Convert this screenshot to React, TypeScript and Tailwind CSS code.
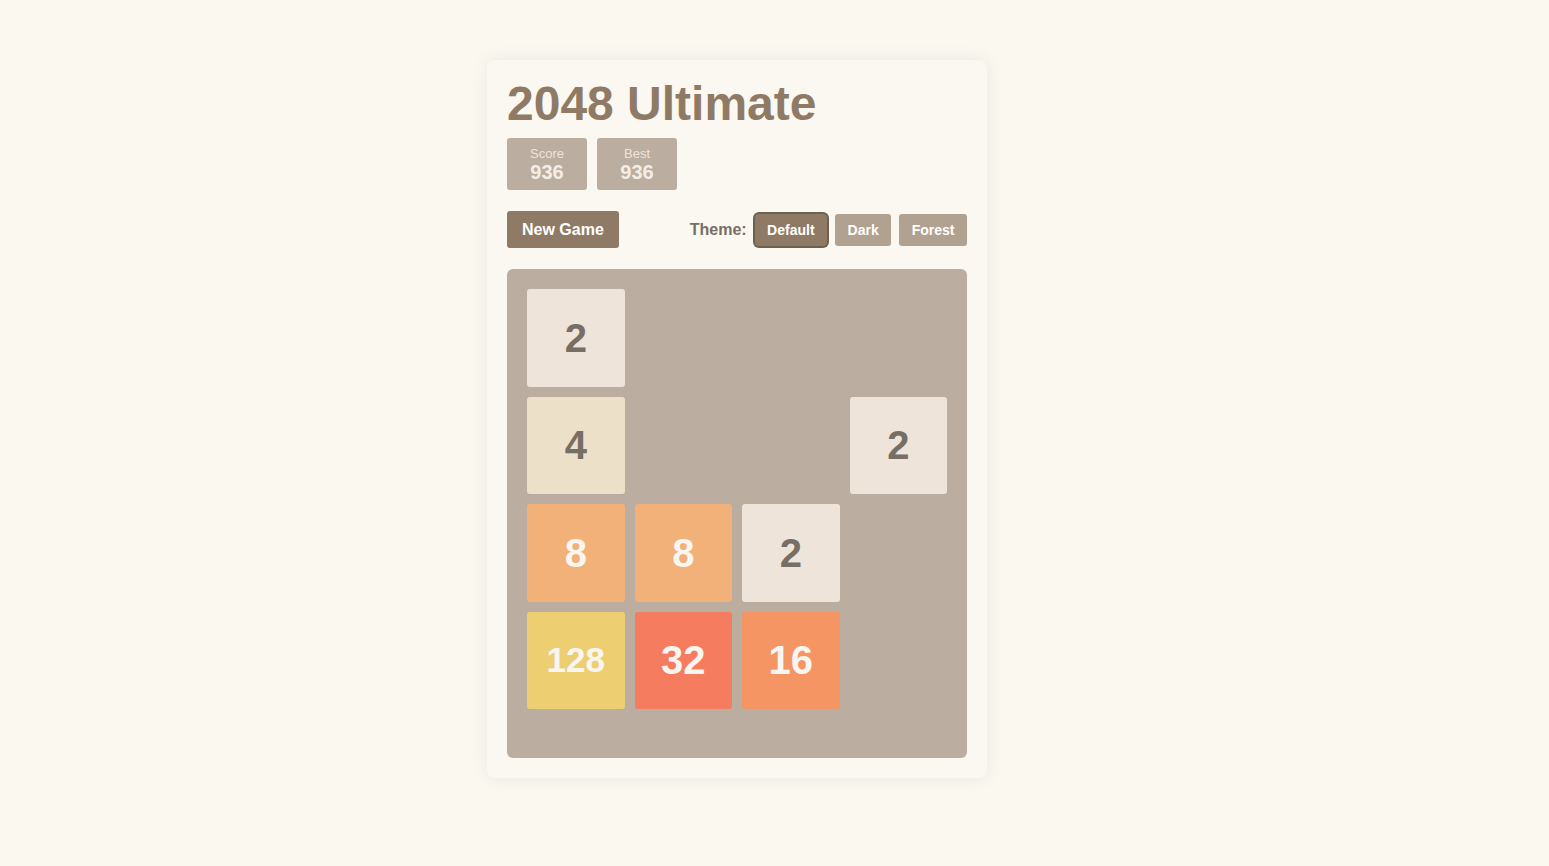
const tiles: (number | null)[] = [
  2, null, null, null,
  4, null, null, 2,
  8, 8, 2, null,
  128, 32, 16, null,
];

const tileStyle: Record<number, string> = {
  2: "bg-[#eee4da] text-[#776e65] text-[40px]",
  4: "bg-[#ede0c8] text-[#776e65] text-[40px]",
  8: "bg-[#f2b179] text-[#f9f6f2] text-[40px]",
  16: "bg-[#f59563] text-[#f9f6f2] text-[40px]",
  32: "bg-[#f67c5f] text-[#f9f6f2] text-[40px]",
  128: "bg-[#edcf72] text-[#f9f6f2] text-[35px]",
};

function ScoreBox({ label, value }: { label: string; value: number }) {
  return (
    <div className="w-20 h-[52px] bg-[#bbada0] rounded-[3px] flex flex-col items-center pt-[8px]">
      <span className="text-[13px] leading-[15px] text-[#eee4da]">{label}</span>
      <span className="text-[20px] leading-[23px] font-bold text-[#f3ede6]">{value}</span>
    </div>
  );
}

export default function App() {
  return (
    <div className="min-h-[866px] bg-[#faf8ef] pt-[60px] pl-[487px] font-['Liberation_Sans',Arial,sans-serif]">
      <div className="w-[500px] bg-[#faf8f0] rounded-lg p-5 shadow-[0_0_18px_rgba(0,0,0,0.07)]">
        <h1 className="text-[48px] leading-none font-bold text-[#8f7a66]">2048 Ultimate</h1>
        <div className="flex gap-[10px] mt-[10px]">
          <ScoreBox label="Score" value={936} />
          <ScoreBox label="Best" value={936} />
        </div>

        <div className="flex items-center justify-between mt-[21px]">
          <button className="h-[37px] px-[15px] bg-[#8f7a66] text-white text-[16px] font-bold rounded-[3px]">
            New Game
          </button>
          <div className="flex items-center gap-2">
            <span className="text-[16px] font-bold text-[#776e65]">Theme:</span>
            <button className="h-8 pt-px px-[12.5px] bg-[#8f7a66] text-white text-[14px] font-bold rounded-[4px] ring-2 ring-[#6f6151]">
              Default
            </button>
            <button className="h-8 pt-px px-[12.5px] bg-[#b1a190] text-white text-[14px] font-bold rounded-[3px]">
              Dark
            </button>
            <button className="h-8 pt-px px-[12.5px] bg-[#b1a190] text-white text-[14px] font-bold rounded-[3px]">
              Forest
            </button>
          </div>
        </div>

        <div className="mt-[21px] h-[489px] bg-[#bbada0] rounded-[6px] p-5 grid grid-cols-4 grid-rows-[repeat(4,97.5px)] gap-[10px] content-start">
          {tiles.map((v, i) =>
            v ? (
              <div
                key={i}
                className={`rounded-[3px] flex items-center justify-center font-bold ${tileStyle[v]}`}
              >
                {v}
              </div>
            ) : (
              <div key={i} />
            )
          )}
        </div>
      </div>
    </div>
  );
}
